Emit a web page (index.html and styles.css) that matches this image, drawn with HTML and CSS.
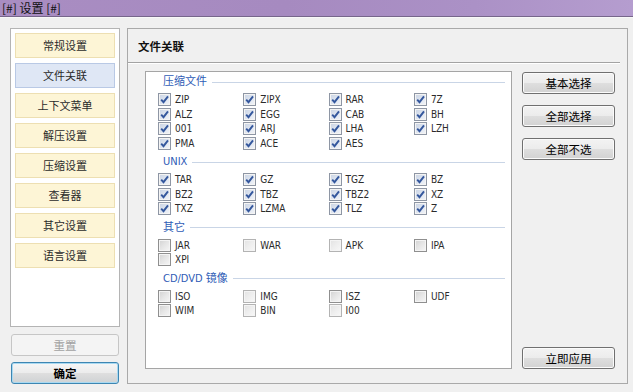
FILE: index.html
```html
<!DOCTYPE html>
<html lang="zh-CN">
<head>
<meta charset="utf-8">
<title>设置</title>
<link rel="stylesheet" href="styles.css">
</head>
<body>
<div class="titlebar">[#] 设置 [#]</div>
<div class="window">
  <div class="sidebar">
    <div class="navpanel">
      <div class="nav">常规设置</div>
      <div class="nav active">文件关联</div>
      <div class="nav">上下文菜单</div>
      <div class="nav">解压设置</div>
      <div class="nav">压缩设置</div>
      <div class="nav">查看器</div>
      <div class="nav">其它设置</div>
      <div class="nav">语言设置</div>
    </div>
    <button class="btn btn-reset" disabled>重置</button>
    <button class="btn btn-ok">确定</button>
  </div>
  <div class="main">
    <div class="main-head">文件关联</div>
    <div class="main-body">
      <div class="assoc">
        <div class="group">
          <div class="group-title"><span>压缩文件</span></div>
          <div class="grid">
            <label class="cb"><span class="box on"><svg viewBox="0 0 11 11"><path d="M2.2 5.6 L4.5 8.2 L9 2.4"/></svg></span>ZIP</label>
            <label class="cb"><span class="box on"><svg viewBox="0 0 11 11"><path d="M2.2 5.6 L4.5 8.2 L9 2.4"/></svg></span>ZIPX</label>
            <label class="cb"><span class="box on"><svg viewBox="0 0 11 11"><path d="M2.2 5.6 L4.5 8.2 L9 2.4"/></svg></span>RAR</label>
            <label class="cb"><span class="box on"><svg viewBox="0 0 11 11"><path d="M2.2 5.6 L4.5 8.2 L9 2.4"/></svg></span>7Z</label>
            <label class="cb"><span class="box on"><svg viewBox="0 0 11 11"><path d="M2.2 5.6 L4.5 8.2 L9 2.4"/></svg></span>ALZ</label>
            <label class="cb"><span class="box on"><svg viewBox="0 0 11 11"><path d="M2.2 5.6 L4.5 8.2 L9 2.4"/></svg></span>EGG</label>
            <label class="cb"><span class="box on"><svg viewBox="0 0 11 11"><path d="M2.2 5.6 L4.5 8.2 L9 2.4"/></svg></span>CAB</label>
            <label class="cb"><span class="box on"><svg viewBox="0 0 11 11"><path d="M2.2 5.6 L4.5 8.2 L9 2.4"/></svg></span>BH</label>
            <label class="cb"><span class="box on"><svg viewBox="0 0 11 11"><path d="M2.2 5.6 L4.5 8.2 L9 2.4"/></svg></span>001</label>
            <label class="cb"><span class="box on"><svg viewBox="0 0 11 11"><path d="M2.2 5.6 L4.5 8.2 L9 2.4"/></svg></span>ARJ</label>
            <label class="cb"><span class="box on"><svg viewBox="0 0 11 11"><path d="M2.2 5.6 L4.5 8.2 L9 2.4"/></svg></span>LHA</label>
            <label class="cb"><span class="box on"><svg viewBox="0 0 11 11"><path d="M2.2 5.6 L4.5 8.2 L9 2.4"/></svg></span>LZH</label>
            <label class="cb"><span class="box on"><svg viewBox="0 0 11 11"><path d="M2.2 5.6 L4.5 8.2 L9 2.4"/></svg></span>PMA</label>
            <label class="cb"><span class="box on"><svg viewBox="0 0 11 11"><path d="M2.2 5.6 L4.5 8.2 L9 2.4"/></svg></span>ACE</label>
            <label class="cb"><span class="box on"><svg viewBox="0 0 11 11"><path d="M2.2 5.6 L4.5 8.2 L9 2.4"/></svg></span>AES</label>
          </div>
        </div>
        <div class="group">
          <div class="group-title"><span>UNIX</span></div>
          <div class="grid">
            <label class="cb"><span class="box on"><svg viewBox="0 0 11 11"><path d="M2.2 5.6 L4.5 8.2 L9 2.4"/></svg></span>TAR</label>
            <label class="cb"><span class="box on"><svg viewBox="0 0 11 11"><path d="M2.2 5.6 L4.5 8.2 L9 2.4"/></svg></span>GZ</label>
            <label class="cb"><span class="box on"><svg viewBox="0 0 11 11"><path d="M2.2 5.6 L4.5 8.2 L9 2.4"/></svg></span>TGZ</label>
            <label class="cb"><span class="box on"><svg viewBox="0 0 11 11"><path d="M2.2 5.6 L4.5 8.2 L9 2.4"/></svg></span>BZ</label>
            <label class="cb"><span class="box on"><svg viewBox="0 0 11 11"><path d="M2.2 5.6 L4.5 8.2 L9 2.4"/></svg></span>BZ2</label>
            <label class="cb"><span class="box on"><svg viewBox="0 0 11 11"><path d="M2.2 5.6 L4.5 8.2 L9 2.4"/></svg></span>TBZ</label>
            <label class="cb"><span class="box on"><svg viewBox="0 0 11 11"><path d="M2.2 5.6 L4.5 8.2 L9 2.4"/></svg></span>TBZ2</label>
            <label class="cb"><span class="box on"><svg viewBox="0 0 11 11"><path d="M2.2 5.6 L4.5 8.2 L9 2.4"/></svg></span>XZ</label>
            <label class="cb"><span class="box on"><svg viewBox="0 0 11 11"><path d="M2.2 5.6 L4.5 8.2 L9 2.4"/></svg></span>TXZ</label>
            <label class="cb"><span class="box on"><svg viewBox="0 0 11 11"><path d="M2.2 5.6 L4.5 8.2 L9 2.4"/></svg></span>LZMA</label>
            <label class="cb"><span class="box on"><svg viewBox="0 0 11 11"><path d="M2.2 5.6 L4.5 8.2 L9 2.4"/></svg></span>TLZ</label>
            <label class="cb"><span class="box on"><svg viewBox="0 0 11 11"><path d="M2.2 5.6 L4.5 8.2 L9 2.4"/></svg></span>Z</label>
          </div>
        </div>
        <div class="group">
          <div class="group-title"><span>其它</span></div>
          <div class="grid">
            <label class="cb"><span class="box"></span>JAR</label>
            <label class="cb"><span class="box faint"></span>WAR</label>
            <label class="cb"><span class="box faint"></span>APK</label>
            <label class="cb"><span class="box"></span>IPA</label>
            <label class="cb"><span class="box"></span>XPI</label>
          </div>
        </div>
        <div class="group">
          <div class="group-title"><span>CD/DVD 镜像</span></div>
          <div class="grid">
            <label class="cb"><span class="box"></span>ISO</label>
            <label class="cb"><span class="box faint"></span>IMG</label>
            <label class="cb"><span class="box"></span>ISZ</label>
            <label class="cb"><span class="box"></span>UDF</label>
            <label class="cb"><span class="box"></span>WIM</label>
            <label class="cb"><span class="box faint"></span>BIN</label>
            <label class="cb"><span class="box faint"></span>I00</label>
          </div>
        </div>
      </div>
      <div class="actions">
        <button class="btn">基本选择</button>
        <button class="btn">全部选择</button>
        <button class="btn">全部不选</button>
        <button class="btn btn-apply">立即应用</button>
      </div>
    </div>
  </div>
</div>
</body>
</html>
```

FILE: styles.css
```css
* { box-sizing: border-box; }

body {
  margin: 0;
  width: 633px;
  height: 392px;
  overflow: hidden;
  background: #f0f0f0;
  font-family: "Noto Sans CJK SC", "DejaVu Sans", sans-serif;
  color: #222;
}

.titlebar {
  height: 17px;
  padding-left: 2px;
  background: linear-gradient(90deg, #a98dc2 0%, #a68ac0 45%, #ab91c6 75%, #b59dcf 100%);
  border-bottom: 1px solid #76668a;
  font-size: 12px;
  line-height: 15px;
  color: #111;
}

.window {
  display: flex;
  gap: 7px;
  padding: 10px 5px 0 10px;
  border-top: 1px solid #f8f8f8;
}

.sidebar {
  width: 110px;
  display: flex;
  flex-direction: column;
}

.navpanel {
  height: 299px;
  background: #fff;
  border: 1px solid #b4b4b4;
  padding: 4px;
  display: flex;
  flex-direction: column;
  gap: 5px;
}

.nav {
  height: 25px;
  border: 1px solid #eddfb2;
  background: #fdf5d6;
  font-size: 11px;
  line-height: 23px;
  text-align: center;
  color: #2a2a2a;
}

.nav.active {
  background: #dfe7f5;
  border-color: #b9c9e5;
}

.btn {
  display: block;
  height: 22px;
  padding: 0;
  border: 1px solid #707070;
  border-radius: 3px;
  background: linear-gradient(#f3f3f3 0%, #ececec 48%, #dedede 52%, #d2d2d2 100%);
  box-shadow: inset 0 0 0 1px #fbfbfb;
  font-family: "Noto Sans CJK SC", sans-serif;
  font-size: 11.5px;
  line-height: 20px;
  color: #000;
  text-align: center;
}

.btn-reset {
  margin: 7px 1px 0;
  border-color: #c6c6c6;
  background: #f4f4f4;
  box-shadow: none;
  color: #a2a2a2;
}

.btn-ok {
  margin: 6px 1px 0;
  border-color: #3d86b2;
  box-shadow: inset 0 0 0 1px #a9d9f1;
  background: linear-gradient(#f6f6f6 0%, #ececec 48%, #dedede 52%, #cfd2d4 100%);
  font-weight: bold;
}

.main {
  width: 501px;
  height: 356px;
  border: 1px solid #a9a9a9;
  display: flex;
  flex-direction: column;
}

.main-head {
  height: 34px;
  margin-right: 7px;
  padding: 10px 0 0 10px;
  border-bottom: 1px solid #a3a3a3;
  box-shadow: 0 1px 0 #ffffff;
  font-size: 11.5px;
  font-weight: bold;
  line-height: 14px;
  color: #111;
}

.main-body {
  flex: 1;
  display: flex;
  gap: 10px;
  padding: 8px 12px 14px 17px;
}

.assoc {
  width: 367px;
  background: #fff;
  border: 1px solid #a5a5a5;
  padding: 3px 0 0 12px;
}

.group { margin-bottom: 4.5px; }

.group-title {
  display: flex;
  align-items: center;
  gap: 5px;
  height: 14px;
  margin: 0 6px 3px 0;
  padding-left: 5px;
  font-family: "DejaVu Sans Condensed", "Noto Sans CJK SC", sans-serif;
  font-size: 11px;
  line-height: 14px;
  color: #2f5cb6;
  white-space: nowrap;
}

.group-title span { font-family: "DejaVu Sans Condensed", "Noto Sans CJK SC", sans-serif; }

.group-title::after {
  content: "";
  flex: 1;
  height: 1px;
  background: #c9d5e6;
}

.grid {
  display: grid;
  grid-template-columns: repeat(4, 85.3px);
  grid-auto-rows: 14.7px;
}

.cb {
  display: flex;
  align-items: center;
  gap: 4px;
  font-family: "DejaVu Sans Condensed", "Liberation Sans Narrow", sans-serif;
  font-size: 10px;
  color: #2b2b2b;
  white-space: nowrap;
}

.box {
  width: 13px;
  height: 13px;
  flex: none;
  border: 1px solid #8f8f8f;
  background: linear-gradient(135deg, #d2d2d2 0%, #e6e6e6 50%, #f6f6f6 100%);
  box-shadow: inset 0 0 0 1px #f4f4f4;
  display: flex;
  align-items: center;
  justify-content: center;
}

.box.faint {
  border-color: #b3b3b3;
  background: linear-gradient(135deg, #e2e2e2 0%, #eeeeee 50%, #f8f8f8 100%);
}

.box.on {
  border-color: #8e96a4;
  background: linear-gradient(135deg, #c9d3e4 0%, #dde4ef 50%, #f3f5f9 100%);
}

.box svg {
  width: 11px;
  height: 11px;
  fill: none;
  stroke: #34579d;
  stroke-width: 1.9;
}

.actions {
  width: 93px;
  display: flex;
  flex-direction: column;
  gap: 11px;
  padding-top: 1px;
}

.actions .btn { width: 93px; }

.btn-apply { margin-top: auto; }
```
